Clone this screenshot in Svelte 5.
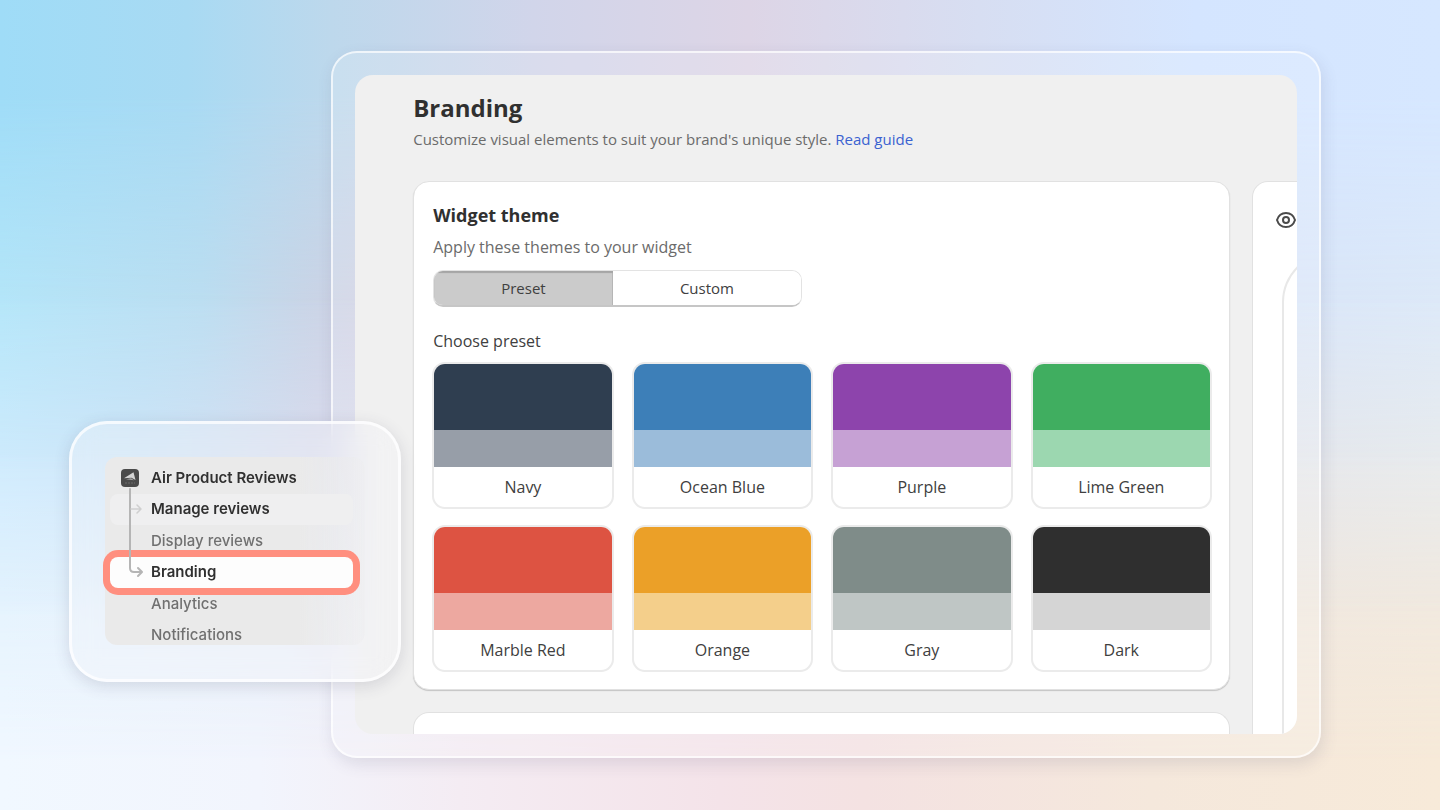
<script>
  const presets = [
    { name: 'Navy', main: '#2f3e50', soft: '#979ea8' },
    { name: 'Ocean Blue', main: '#3d7fb8', soft: '#9bbcda' },
    { name: 'Purple', main: '#8d44ac', soft: '#c6a1d4' },
    { name: 'Lime Green', main: '#40ae60', soft: '#9cd7b0' },
    { name: 'Marble Red', main: '#dd5342', soft: '#eda8a0' },
    { name: 'Orange', main: '#eba028', soft: '#f4cf8b' },
    { name: 'Gray', main: '#7f8c89', soft: '#bfc6c5' },
    { name: 'Dark', main: '#2f2f2f', soft: '#d5d5d5' }
  ];
  let mode = $state('preset');
  let chosen = $state('');
</script>

<div class="stage">
  <div class="wash w1"></div>
  <div class="wash w2"></div>
  <div class="wash w3"></div>
  <div class="wash w4"></div>

  <div class="frame">
    <main class="screen">
      <header>
        <h1>Branding</h1>
        <p>Customize visual elements to suit your brand's unique style. <a href="#guide">Read guide</a></p>
      </header>
      <div class="columns">
        <div class="primary">
          <section class="card theme">
            <h2>Widget theme</h2>
            <p class="hint">Apply these themes to your widget</p>
            <div class="segments">
              <button class:on={mode === 'preset'} onclick={() => (mode = 'preset')}>Preset</button>
              <button class:on={mode === 'custom'} onclick={() => (mode = 'custom')}>Custom</button>
            </div>
            <h3>Choose preset</h3>
            <div class="presets">
              {#each presets as p}
                <button class="preset" aria-pressed={chosen === p.name} onclick={() => (chosen = p.name)}>
                  <span class="main" style="background:{p.main}"></span>
                  <span class="soft" style="background:{p.soft}"></span>
                  <span class="name">{p.name}</span>
                </button>
              {/each}
            </div>
          </section>
          <section class="card next"></section>
        </div>
        <aside class="card preview">
          <svg width="22" height="22" viewBox="0 0 22 22" fill="none" stroke="#4a4a4a" stroke-width="2">
            <path d="M2 11C3.400 6.600 6.800 4 11 4s7.600 2.600 9 7c-1.400 4.400-4.800 7-9 7s-7.600-2.600-9-7z" stroke-linejoin="round" />
            <circle cx="11" cy="11" r="3" />
          </svg>
          <div class="device"></div>
        </aside>
      </div>
    </main>
  </div>

  <div class="glass">
    <nav class="menu">
      <svg class="tree" width="16" height="96" viewBox="0 0 16 96" fill="none" stroke="#b5b5b5" stroke-width="2" stroke-linecap="round" stroke-linejoin="round">
        <path d="M2 1v79q0 4 4 4h7M10 80l4 4-4 4" />
        <path d="M3 21h9M9 17l4 4-4 4" stroke="#cfcfcf" stroke-width="1.500" />
      </svg>
      <a class="strong" href="#app">
        <svg class="logo" width="18" height="18" viewBox="0 0 18 18">
          <rect width="18" height="18" rx="4" fill="#4b4b4b" />
          <path d="M3 9.200 12.500 3.200 14.500 11 10.500 8.800z" fill="#d4d4d4" />
          <path d="M5 10.300 10 9.200 13 11.300z" fill="#a8a8a8" />
          <path d="M4 14h10" stroke="#6c6c6c" stroke-dasharray="2 1" />
        </svg>
        Air Product Reviews
      </a>
      <a class="strong soft-row" href="#manage">Manage reviews</a>
      <a href="#display">Display reviews</a>
      <a class="strong current" href="#branding">Branding</a>
      <a href="#analytics">Analytics</a>
      <a href="#notifications">Notifications</a>
    </nav>
  </div>
</div>

<style>
  :global(body) {
    margin: 0;
  }
  .stage {
    position: relative;
    box-sizing: border-box;
    display: flex;
    min-height: 100vh;
    padding: 51px 119px 52px 23%;
    overflow: hidden;
    background: linear-gradient(90deg, #f1f8ff, #f2f5fd 18%, #f4ecf3 32%, #f4e3e9 50%, #f4e2e2 60%, #f5e8dc 80%, #f7ead9);
    font-family: 'Open Sans', 'Noto Sans', sans-serif;
    color: #303030;
  }
  .wash {
    position: absolute;
    inset: 0;
  }
  .w1 {
    background: linear-gradient(90deg, #e5f3fe, #e8eff9 20%, #ece4f0 36%, #eddde6 60%, #f0e8df 88%, #f1e9df);
    mask-image: linear-gradient(#000 74%, transparent 94%);
  }
  .w2 {
    background: linear-gradient(90deg, #cfebfd, #cfe5f8 10%, #dadcee 22%, #dcd8e8 50%, #e5e7ec 89%, #e8ebed);
    mask-image: linear-gradient(#000 56%, transparent 76%);
  }
  .w3 {
    background: linear-gradient(90deg, #b5e6f9, #bcdef1 14%, #c9d5e7 21%, #d3cfe2 27%, #d3cce0 50%, #dae6f8 90%, #dde9f8);
    mask-image: linear-gradient(#000 37%, transparent 58%);
  }
  .w4 {
    background: linear-gradient(90deg, #9fdcf7, #a8daf3 13%, #bdd8ec 23%, #d1d5ea 37%, #ddd5e6 52%, #d7def2 68%, #d4e5ff 83%, #d6e7ff);
    mask-image: linear-gradient(#000 12%, transparent 38%);
  }
  .frame {
    position: relative;
    box-sizing: border-box;
    display: flex;
    flex: 1;
    min-width: 0;
    padding: 22px;
    border: 2px solid rgb(255 255 255 / 75%);
    border-radius: 26px;
    background: rgb(255 255 255 / 18%);
    background-clip: padding-box;
    box-shadow: 2px 6px 16px rgb(80 80 110 / 14%);
  }
  .screen {
    display: flex;
    flex: 1;
    flex-direction: column;
    min-width: 0;
    padding: 16px 0 0 58px;
    border-radius: 18px;
    overflow: hidden;
    background: #f0f0f0;
  }
  header {
    height: 90px;
  }
  h1,
  h2,
  h3,
  p {
    margin: 0;
  }
  h1 {
    font-size: 24px;
    line-height: 34px;
    font-weight: 700;
  }
  header p {
    margin-top: 3px;
    font-size: 15px;
    line-height: 22px;
    color: #6b6b6b;
  }
  header a {
    color: #3a62d0;
    text-decoration: none;
  }
  .columns {
    display: grid;
    flex: 1;
    grid-template-columns: minmax(0, 1fr) 45px;
    gap: 22px;
  }
  .primary {
    display: flex;
    flex-direction: column;
    gap: 22px;
  }
  .card {
    box-sizing: border-box;
    border: 1px solid #e1e1e1;
    border-radius: 16px;
    background: #fff;
  }
  .theme {
    padding: 21px 18px 17px 19px;
    box-shadow: 0 1px 1px #c4c4c4;
  }
  .next {
    flex: 1;
    min-height: 20px;
    border-bottom: 0;
    border-radius: 16px 16px 0 0;
  }
  h2 {
    font-size: 18px;
    line-height: 24px;
  }
  .hint {
    margin-top: 8px;
    font-size: 16px;
    line-height: 24px;
    color: #6b6b6b;
  }
  .segments {
    box-sizing: border-box;
    display: grid;
    grid-template-columns: 179fr 189fr;
    width: 369px;
    height: 37px;
    margin-top: 11px;
    border: 1px solid #e3e3e3;
    border-bottom: 2px solid #c6c6c6;
    border-radius: 10px;
    overflow: hidden;
  }
  button {
    padding: 0;
    border: 0;
    background: #fff;
    font: inherit;
    color: #404040;
  }
  .segments button {
    font-size: 15px;
  }
  .segments .on {
    background: #cbcbcb;
    box-shadow: inset 0 2px 1px #a5a5a5, inset -1px 0 #b8b8b8;
  }
  h3 {
    margin-top: 22px;
    font-size: 16px;
    line-height: 24px;
    font-weight: 400;
    color: #404040;
  }
  .presets {
    display: grid;
    grid-template-columns: repeat(4, minmax(0, 1fr));
    gap: 16px 18px;
    margin: 9px -1px 0;
  }
  .preset {
    display: flex;
    flex-direction: column;
    border: 2px solid #ebebeb;
    border-radius: 13px;
    overflow: hidden;
  }
  .main,
  .soft,
  .name {
    width: 100%;
  }
  .main {
    height: 66px;
  }
  .soft {
    height: 37px;
  }
  .name {
    font-size: 16px;
    line-height: 40px;
  }
  .preview {
    display: flex;
    flex-direction: column;
    width: 300px;
    padding: 27px 22px 0;
    border-bottom: 0;
    border-radius: 16px 16px 0 0;
  }
  .device {
    flex: 1;
    margin: 21px 0 0 7px;
    border: 2px solid #e8e8e8;
    border-bottom: 0;
    border-radius: 50px 0 0 0;
  }
  .glass {
    position: absolute;
    left: 69px;
    top: 421px;
    box-sizing: border-box;
    width: 332px;
    height: 261px;
    padding: 33px;
    border: 3px solid rgb(255 255 255 / 75%);
    border-radius: 38px;
    background: rgb(245 245 250 / 35%);
    backdrop-filter: blur(14px);
    box-shadow: 0 4px 16px rgb(60 60 90 / 16%);
    font-family: Inter, sans-serif;
  }
  .menu {
    position: relative;
    box-sizing: border-box;
    display: grid;
    grid-auto-rows: 1fr;
    height: 194px;
    padding: 5px 7px 0 5px;
  }
  .menu::before {
    content: '';
    position: absolute;
    z-index: -1;
    inset: 0 0 6px;
    border-radius: 12px;
    background: linear-gradient(90deg, #eaeaea 75%, rgb(236 236 238 / 40%));
  }
  .menu a {
    display: flex;
    align-items: center;
    gap: 12px;
    min-width: 0;
    padding-left: 41px;
    font-size: 15px;
    line-height: 20px;
    font-weight: 500;
    color: #707070;
    text-decoration: none;
  }
  .menu .strong {
    font-weight: 600;
    color: #303030;
  }
  .logo {
    margin-left: -30px;
  }
  .menu .soft-row {
    margin-right: 5px;
    border-radius: 8px;
    background: #efeff0;
  }
  .menu .current {
    margin-right: 5px;
    border-radius: 8px;
    background: #fdfdfd;
    box-shadow: 0 0 0 7px #ff8f7f;
  }
  .tree {
    position: absolute;
    z-index: 1;
    left: 23px;
    top: 31px;
  }
</style>
